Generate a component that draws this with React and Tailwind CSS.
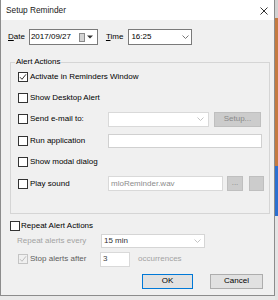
import React from "react";

const Check = ({ checked, disabled }) => (
  <span
    className={`flex h-[10px] w-[10px] shrink-0 items-center justify-center border ${
      disabled ? "border-[#c4c4c4]" : "border-[#333333] bg-white"
    }`}
  >
    {checked && (
      <svg width="8" height="8" viewBox="0 0 8 8">
        <path
          d="M1 4.2 L3 6.3 L7 1.3"
          fill="none"
          stroke={disabled ? "#bdbdbd" : "#333333"}
          strokeWidth="1"
        />
      </svg>
    )}
  </span>
);

const Chevron = ({ color }) => (
  <svg width="7" height="4" viewBox="0 0 7 4">
    <path d="M0.5 0.5 L3.5 3.5 L6.5 0.5" fill="none" stroke={color} strokeWidth="1" />
  </svg>
);

const Row = ({ label, checked, children }) => (
  <div className="flex h-[21.4px] items-center pl-[7px]">
    <div className="flex w-[90px] shrink-0 items-center gap-[2px]">
      <Check checked={checked} />
      <span>{label}</span>
    </div>
    {children}
  </div>
);

export default function App() {
  return (
    <div className="flex h-[300px] w-[278px] whitespace-nowrap bg-[#e9e9e9] font-['Liberation_Sans',Arial,sans-serif] text-[8px] leading-none text-black">
      <div className="flex h-[296px] w-[275px] shrink-0 flex-col border-x border-b border-[#8c8c8c] bg-[#f0f0f0]">
        {/* title bar */}
        <div className="flex h-[20px] shrink-0 items-center justify-between bg-white pl-[5px] pr-[6px] pt-[1px]">
          <span className="text-[8.3px] text-[#1a1a1a]">Setup Reminder</span>
          <svg width="8" height="8" viewBox="0 0 8 8">
            <path d="M0.5 0.5 L7.5 7.5 M7.5 0.5 L0.5 7.5" stroke="#333" strokeWidth="1" />
          </svg>
        </div>

        {/* date / time */}
        <div className="mt-[9px] flex h-[16px] items-center pl-[7px]">
          <span>
            <span className="underline">D</span>ate
          </span>
          <div className="ml-[4px] flex h-[16px] w-[69px] items-center border border-[#7a7a7a] bg-white pl-[1px] pr-[4px]">
            <span>2017/09/27</span>
            <span className="ml-auto h-[9px] w-[6px] border border-[#8a8a8a] bg-[#d4d4d4]" />
            <svg className="ml-[2px]" width="6" height="4" viewBox="0 0 6 4">
              <path d="M0 0.5 L6 0.5 L3 3.5 Z" fill="#333" />
            </svg>
          </div>
          <span className="ml-[8px]">
            <span className="underline">T</span>ime
          </span>
          <div className="ml-[5px] flex h-[16px] w-[64px] items-center justify-between border border-[#7a7a7a] bg-white pl-[2px] pr-[2px]">
            <span>16:25</span>
            <Chevron color="#777777" />
          </div>
        </div>

        {/* alert actions group */}
        <fieldset className="ml-[9px] mt-[13px] w-[260px] border border-[#d5d5d5] pb-[19px]">
          <legend className="ml-[4px] px-[1px] leading-[8px]">Alert Actions</legend>
          <Row label="Activate in Reminders Window" checked />
          <Row label="Show Desktop Alert" />
          <Row label="Send e-mail to:">
            <div className="flex h-[15px] w-[101px] items-center justify-end border border-[#d9d9d9] bg-white pr-[4px]">
              <Chevron color="#c4c4c4" />
            </div>
            <div className="ml-[5px] flex h-[15px] w-[47px] items-center justify-center border border-[#bfbfbf] bg-[#cccccc] text-[#8a8a8a]">
              Setup...
            </div>
          </Row>
          <Row label="Run application">
            <div className="h-[14px] w-[154px] border border-[#d0d0d0] bg-white" />
          </Row>
          <Row label="Show modal dialog" />
          <Row label="Play sound">
            <div className="flex h-[15px] w-[115px] items-center border border-[#d9d9d9] bg-white pl-[2px] text-[#8c8c8c]">
              mloReminder.wav
            </div>
            <div className="ml-[4px] flex h-[15px] w-[16px] items-end justify-center border border-[#bfbfbf] bg-[#cccccc] pb-[3px] text-[#8a8a8a]">
              ...
            </div>
            <div className="ml-[6px] h-[15px] w-[15px] border border-[#bfbfbf] bg-[#cccccc]" />
          </Row>
        </fieldset>

        {/* repeat */}
        <div className="mt-[5px] flex h-[14px] items-center gap-[1px] pl-[9px]">
          <Check />
          <span>Repeat Alert Actions</span>
        </div>
        <div className="mt-[0.5px] flex h-[14px] items-center pl-[16px]">
          <span className="w-[84px] shrink-0 text-[#a3a3a3]">Repeat alerts every</span>
          <div className="flex h-[14px] w-[104px] items-center justify-between border border-[#d5d5d5] bg-white pl-[2px] pr-[3px] text-[#333]">
            <span>15 min</span>
            <Chevron color="#c4c4c4" />
          </div>
        </div>
        <div className="mt-[4px] flex h-[15px] items-center pl-[17px]">
          <div className="flex w-[82px] shrink-0 items-center gap-[2px]">
            <Check checked disabled />
            <span className="text-[#5e5e5e]">Stop alerts after</span>
          </div>
          <div className="flex h-[15px] w-[30px] items-center border border-[#d9d9d9] bg-white pl-[2px] text-[#444]">
            3
          </div>
          <span className="ml-[8px] text-[#a3a3a3]">occurrences</span>
        </div>

        {/* buttons */}
        <div className="mt-[7px] flex h-[15px] pl-[141px]">
          <div className="flex w-[51px] items-center justify-center border border-[#0078d7] bg-[#e1e1e1]">OK</div>
          <div className="ml-[17px] flex w-[53px] items-center justify-center border border-[#adadad] bg-[#e1e1e1]">
            Cancel
          </div>
        </div>
      </div>

      {/* background window edge */}
      <div className="flex flex-1 flex-col">
        <div className="h-[18px] bg-[#d2d2d2]" />
        <div className="h-[148px] bg-[#c47a40]" />
        <div className="h-[50px] bg-[#2c6fcf]" />
        <div className="flex-1 bg-[#e4e4e4]" />
      </div>
    </div>
  );
}
